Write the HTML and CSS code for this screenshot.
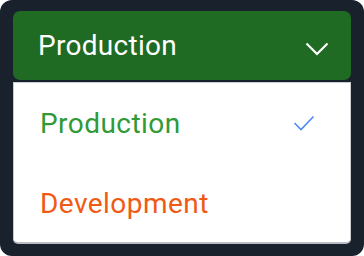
FILE: index.html
```html
<!DOCTYPE html>
<html lang="en">
<head>
    <meta charset="UTF-8">
    <title>Environment select</title>
    <link rel="stylesheet" href="styles.css">
</head>
<body>
    <div class="frame">
        <div class="select">
            <span class="select-label">Production</span>
            <svg class="chevron" width="24" height="14" viewBox="0 0 24 14">
                <path d="M1.5 1.5 L12 12 L22.5 1.5" fill="none" stroke="#fff" stroke-width="2.2"/>
            </svg>
        </div>
        <ul class="menu">
            <li class="option prod">
                Production
                <svg class="check" width="22" height="16" viewBox="0 0 22 16">
                    <path d="M1.5 8 L8 14.5 L20.5 1.5" fill="none" stroke="#4a8af4" stroke-width="1.6"/>
                </svg>
            </li>
            <li class="option dev">Development</li>
        </ul>
    </div>
</body>
</html>
```

FILE: styles.css
```css
html, body {
    margin: 0;
    padding: 0;
    background: #fff;
}
body {
    font-family: Roboto, "Noto Sans", sans-serif;
}
.frame {
    width: 364px;
    height: 256px;
    box-sizing: border-box;
    background: #18212c;
    border-radius: 12px;
    padding: 11px 13px 0 13px;
}
.select {
    height: 69px;
    background: #1f6b24;
    border-radius: 7px;
    display: flex;
    align-items: center;
    justify-content: space-between;
    padding: 0 22px 0 25px;
    box-sizing: border-box;
}
.select-label {
    color: #fff;
    font-size: 28px;
    letter-spacing: 0.3px;
}
.chevron {
    margin-top: 6px;
}
.menu {
    list-style: none;
    margin: 2px 0 0 0;
    padding: 0;
    background: #fff;
    border: 1px solid #c9ccd0;
    border-bottom: 2px solid #b9bdc2;
    border-radius: 0 0 5px 5px;
    height: 162px;
    box-sizing: border-box;
}
.option {
    height: 80px;
    display: flex;
    align-items: center;
    justify-content: space-between;
    padding: 0 35px 0 26px;
    font-size: 28px;
    letter-spacing: 0.45px;
}
.prod {
    color: #2f9a36;
}
.dev {
    color: #f05a14;
}
```
